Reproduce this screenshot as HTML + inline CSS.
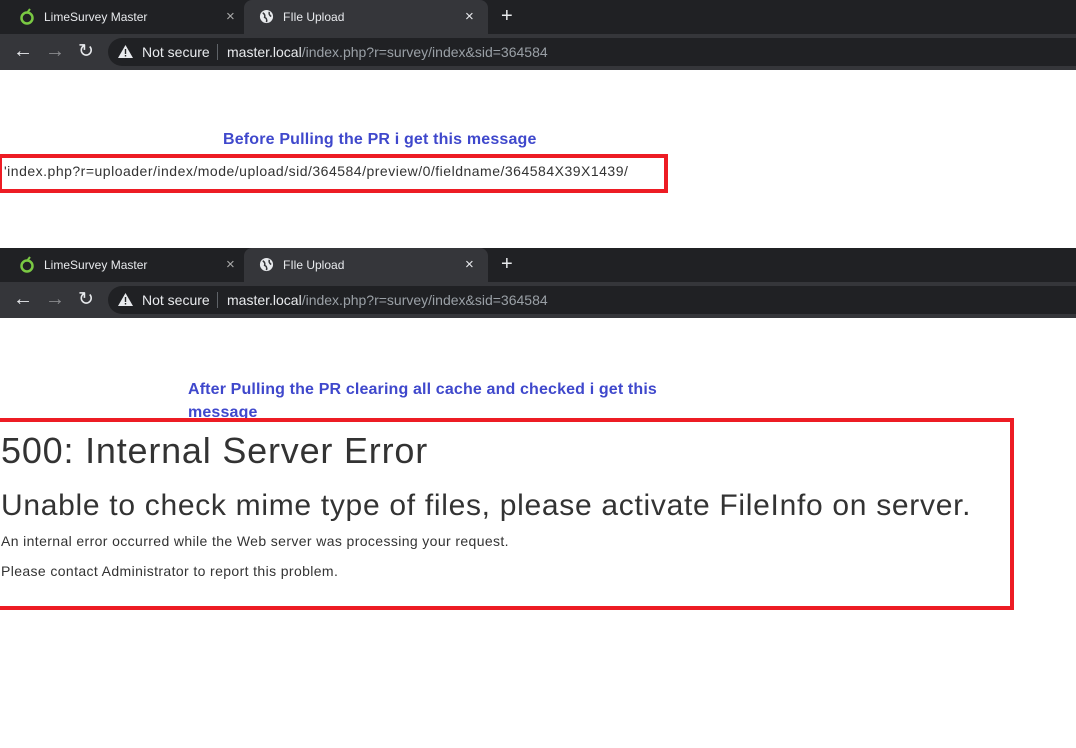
<!DOCTYPE html>
<html><head><meta charset="utf-8"><style>
*{margin:0;padding:0;box-sizing:border-box}
body{width:1076px;height:748px;background:#fff;position:relative;overflow:hidden;font-family:"Liberation Sans",sans-serif}
.a{position:absolute}
.strip{left:0;width:1076px;height:34px;background:#202124}
.tb{left:0;width:1076px;height:36px;background:#35363a}
.atab{width:244px;height:34px;background:#35363a;border-radius:8px 8px 0 0}
.t{color:#e8eaed;font-size:12px;white-space:nowrap}
.omni{left:108px;width:968px;height:28px;background:#202124;border-radius:14px 0 0 14px}
.blue{color:#3f48cc;font-weight:bold;font-size:16px;letter-spacing:0.17px;white-space:nowrap}
.red{border:4px solid #ed1c24}
.dk{color:#333;white-space:nowrap}
</style></head><body>

<!-- Browser 1 -->
<div class="a strip" style="top:0"></div>
<div class="a atab" style="left:244px;top:0"></div>
<svg class="a" style="left:19px;top:8px" width="16" height="18" viewBox="0 0 16 18"><circle cx="8" cy="10" r="5.5" fill="none" stroke="#7ac943" stroke-width="2.5"/><path d="M8 5 L11 1" stroke="#7ac943" stroke-width="2"/></svg>
<div class="a t" style="left:44px;top:10px">LimeSurvey Master</div>
<div class="a t" style="left:226px;top:8px;font-size:15px;color:#aaa">×</div>
<svg class="a" style="left:259px;top:9px" width="15" height="15" viewBox="0 0 16 16"><circle cx="8" cy="8" r="7" fill="#e8eaed"/><path d="M4 4 Q7 6 6 9 Q9 10 8 14 M11 3 Q10 6 13 8" stroke="#35363a" stroke-width="1.6" fill="none"/></svg>
<div class="a t" style="left:283px;top:10px">FIle Upload</div>
<div class="a t" style="left:465px;top:8px;font-size:15px">×</div>
<div class="a t" style="left:501px;top:5px;font-size:20px">+</div>
<div class="a tb" style="top:34px"></div>
<div class="a t" style="left:13px;top:40px;font-size:20px">←</div>
<div class="a t" style="left:45px;top:40px;font-size:20px;color:#8a8b8e">→</div>
<div class="a t" style="left:78px;top:40px;font-size:19px">↻</div>
<div class="a omni" style="top:38px"></div>
<svg class="a" style="left:118px;top:45px" width="15" height="13" viewBox="0 0 15 13"><path d="M7.5 0 L15 13 L0 13Z" fill="#e8eaed"/><rect x="6.8" y="4" width="1.4" height="5" fill="#202124"/><rect x="6.8" y="10" width="1.4" height="1.5" fill="#202124"/></svg>
<div class="a t" style="left:142px;top:44px;font-size:14px">Not secure</div>
<div class="a" style="left:217px;top:44px;width:1px;height:16px;background:#5f6368"></div>
<div class="a t" style="left:227px;top:44px;font-size:14px">master.local<span style="color:#9aa0a6">/index.php?r=survey/index&amp;sid=364584</span></div>

<div class="a blue" style="left:223px;top:131px">Before Pulling the PR i get this message</div>
<div class="a red" style="left:-2px;top:154px;width:670px;height:39px"></div>
<div class="a dk" style="left:4px;top:163px;font-size:14px;letter-spacing:0.5px">'index.php?r=uploader/index/mode/upload/sid/364584/preview/0/fieldname/364584X39X1439/</div>

<!-- Browser 2 -->
<div class="a strip" style="top:248px"></div>
<div class="a atab" style="left:244px;top:248px"></div>
<svg class="a" style="left:19px;top:256px" width="16" height="18" viewBox="0 0 16 18"><circle cx="8" cy="10" r="5.5" fill="none" stroke="#7ac943" stroke-width="2.5"/><path d="M8 5 L11 1" stroke="#7ac943" stroke-width="2"/></svg>
<div class="a t" style="left:44px;top:258px">LimeSurvey Master</div>
<div class="a t" style="left:226px;top:256px;font-size:15px;color:#aaa">×</div>
<svg class="a" style="left:259px;top:257px" width="15" height="15" viewBox="0 0 16 16"><circle cx="8" cy="8" r="7" fill="#e8eaed"/><path d="M4 4 Q7 6 6 9 Q9 10 8 14 M11 3 Q10 6 13 8" stroke="#35363a" stroke-width="1.6" fill="none"/></svg>
<div class="a t" style="left:283px;top:258px">FIle Upload</div>
<div class="a t" style="left:465px;top:256px;font-size:15px">×</div>
<div class="a t" style="left:501px;top:253px;font-size:20px">+</div>
<div class="a tb" style="top:282px"></div>
<div class="a t" style="left:13px;top:288px;font-size:20px">←</div>
<div class="a t" style="left:45px;top:288px;font-size:20px;color:#8a8b8e">→</div>
<div class="a t" style="left:78px;top:288px;font-size:19px">↻</div>
<div class="a omni" style="top:286px"></div>
<svg class="a" style="left:118px;top:293px" width="15" height="13" viewBox="0 0 15 13"><path d="M7.5 0 L15 13 L0 13Z" fill="#e8eaed"/><rect x="6.8" y="4" width="1.4" height="5" fill="#202124"/><rect x="6.8" y="10" width="1.4" height="1.5" fill="#202124"/></svg>
<div class="a t" style="left:142px;top:292px;font-size:14px">Not secure</div>
<div class="a" style="left:217px;top:292px;width:1px;height:16px;background:#5f6368"></div>
<div class="a t" style="left:227px;top:292px;font-size:14px">master.local<span style="color:#9aa0a6">/index.php?r=survey/index&amp;sid=364584</span></div>

<div class="a blue" style="left:188px;top:378px;line-height:23px;letter-spacing:0.15px">After Pulling the PR clearing all cache and checked i get this<br>message</div>
<div class="a red" style="left:-6px;top:418px;width:1020px;height:192px"></div>
<div class="a dk" style="left:1px;top:430px;font-size:36px;letter-spacing:0.8px">500: Internal Server Error</div>
<div class="a dk" style="left:1px;top:489px;font-size:30px;letter-spacing:0.7px">Unable to check mime type of files, please activate FileInfo on server.</div>
<div class="a dk" style="left:1px;top:533px;font-size:14px;letter-spacing:0.38px">An internal error occurred while the Web server was processing your request.</div>
<div class="a dk" style="left:1px;top:563px;font-size:14px;letter-spacing:0.38px">Please contact Administrator to report this problem.</div>
</body></html>
